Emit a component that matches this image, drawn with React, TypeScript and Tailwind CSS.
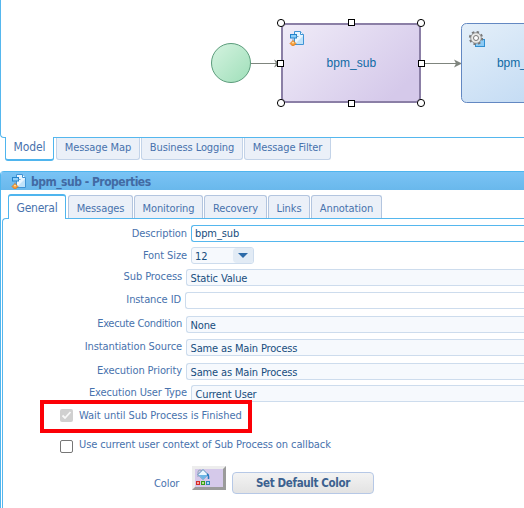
import React from 'react';

const UI = "font-['DejaVu_Sans_Condensed','DejaVu_Sans',sans-serif] [font-stretch:condensed]";

function SubProcessIcon({ className }: { className: string }) {
  return (
    <svg className={className} width="16" height="16" viewBox="0 0 16 16">
      <path d="M5.500 1.500h6l3 3v10h-9z" fill="#e8f5ff" stroke="#3f94d6" />
      <path d="M6 14L14 6v8z" fill="#bfe2fa" />
      <path d="M11.500 1.500v3h3" fill="#fff" stroke="#3f94d6" />
      <rect x="1.500" y="4.500" width="6" height="3.500" fill="#8fd0fa" stroke="#2583cb" />
      <path d="M4 8.500v3M7.500 6.500h2" stroke="#7aa2c4" />
      <path d="M4 10.500l3 3-2.500 2.500h-1l-2.500-2.500z" fill="#f79a35" stroke="#d87516" strokeWidth=".7" />
      <path d="M4 11.500l1.500 1.500L4 13.500 2.500 13z" fill="#ffe2a4" />
    </svg>
  );
}

function Diagram() {
  return (
    <svg className="block" width="523" height="137" viewBox="1 0 523 137">
      <defs>
        <linearGradient id="start" x1="0" y1="0" x2="1" y2="1">
          <stop offset="0" stopColor="#d5f3e0" />
          <stop offset="1" stopColor="#9fdfb9" />
        </linearGradient>
        <linearGradient id="sub" x1="0" y1="0" x2="1" y2=".6">
          <stop offset="0" stopColor="#f0ecf8" />
          <stop offset="1" stopColor="#d5c9ea" />
        </linearGradient>
        <linearGradient id="task" x1="0" y1="0" x2="1" y2="1">
          <stop offset="0" stopColor="#e4eff9" />
          <stop offset="1" stopColor="#b9d5f2" />
        </linearGradient>
      </defs>
      <circle cx="231" cy="63" r="19.500" fill="url(#start)" stroke="#5b9c7b" />
      <path d="M251 63.500h27M421 63.500h36" stroke="#7f857e" />
      <path d="M274 59.500l7 4-7 4 2-4zM454 59.500l8 4-8 4 2-4z" fill="#7f857e" />
      <rect x="282" y="24" width="138" height="78" rx="4" fill="url(#sub)" stroke="#8b7fa6" strokeWidth="2" />
      <rect x="461.500" y="23.500" width="140" height="79" rx="5" fill="url(#task)" stroke="#6388c2" />
      <g fontFamily="Liberation Sans, Arial, sans-serif" fontSize="12" fill="#0f6aa5">
        <text x="326.500" y="66.500" textLength="49.500">bpm_sub</text>
        <text x="497" y="66.500">bpm_</text>
      </g>
      <g transform="translate(289 30)">
        <SubProcessIcon className="" />
      </g>
      <rect x="475.500" y="39.500" width="9" height="7" fill="#8ccaf4" stroke="#2f8fd1" />
      <circle cx="476" cy="38" r="6" fill="none" stroke="#777" strokeWidth="2.200" strokeDasharray="2.350 2.350" />
      <circle cx="476" cy="38" r="5.300" fill="#e9e9e7" stroke="#858585" strokeWidth=".8" />
      <circle cx="476" cy="38" r="2.500" fill="#fff" stroke="#777" />
      <g fill="#fff" stroke="#000">
        <circle cx="281" cy="23" r="3.600" />
        <circle cx="421" cy="23" r="3.600" />
        <circle cx="281" cy="103" r="3.600" />
        <circle cx="421" cy="103" r="3.600" />
        <rect x="348.500" y="19.500" width="6" height="6" />
        <rect x="348.500" y="100.500" width="6" height="6" />
        <rect x="277.500" y="60.500" width="6" height="6" />
        <rect x="418.500" y="60.500" width="6" height="6" />
      </g>
    </svg>
  );
}

const modelTabs = [
  { label: 'Message Map', size: 'w-[84px]' },
  { label: 'Business Logging', size: 'w-[102px]' },
  { label: 'Message Filter', size: 'w-[87px]' },
];

const propertyTabs = [
  { label: 'Messages', size: 'w-[65px]' },
  { label: 'Monitoring', size: 'w-[69px]' },
  { label: 'Recovery', size: 'w-[63px]' },
  { label: 'Links', size: 'w-[42px]' },
  { label: 'Annotation', size: 'w-[71px]' },
];

const rows = [
  { label: 'Sub Process', value: 'Static Value', size: 'w-[183px] pt-px', gap: 'mb-[6px]', fill: 'bg-[#f6f9fd]' },
  { label: 'Instance ID', value: '', size: 'w-[182px] pt-px', gap: 'mb-[7px]', fill: 'bg-white' },
  { label: 'Execute Condition', value: 'None', size: 'w-[183px] pt-px tracking-[-0.3px]', gap: 'mb-[6px]', fill: 'bg-[#f6f9fd]' },
  { label: 'Instantiation Source', value: 'Same as Main Process', size: 'w-[183px] pt-px', gap: 'mb-[7px]', fill: 'bg-[#f6f9fd]' },
  { label: 'Execution Priority', value: 'Same as Main Process', size: 'w-[183px] pt-px', gap: 'mb-[5px]', fill: 'bg-[#f6f9fd]' },
  { label: 'Execution User Type', value: 'Current User', size: 'w-[188px] pt-px', gap: '', fill: 'bg-[#f6f9fd]' },
];

export default function App() {
  return (
    <div className={`h-[508px] w-[524px] overflow-hidden whitespace-nowrap bg-white text-[11px] leading-[14px] tracking-[-0.1px] text-[#4872ad] ${UI}`}>
      <div className="h-[138px] overflow-hidden rounded-bl-[4px] border-b border-l border-[#55b7ee]">
        <Diagram />
      </div>
      <div className="flex h-[33px] gap-[2px] pl-[5px]">
        <div className="relative -mt-px h-[24px] w-[49px] rounded-b-[3px] border-x border-b-2 border-[#4fb5ee] bg-white pt-[3px] text-center text-[12px]">Model</div>
        {modelTabs.map((t) => (
          <div key={t.label} className={`-mr-px h-[22px] rounded-b-[3px] border border-t-0 border-[#c3d3e8] bg-[#ebf0f8] pt-[3px] text-center ${t.size}`}>{t.label}</div>
        ))}
      </div>

      <div className="h-[337px] overflow-hidden rounded-tl-[4px] border-l border-[#4fb5ee]">
        <div className="flex h-[19px] items-center border-t border-[#4fb5ee] bg-linear-to-b from-[#7ac3f5] to-[#69b8ec] pl-[10px]">
          <SubProcessIcon className="" />
          <span className="ml-[4px] pt-[2px] text-[12px] font-bold tracking-[-0.5px] text-[#426aa3]">bpm_sub - Properties</span>
        </div>
        <div className="flex h-[28px] items-end gap-[1px] pl-[7px]">
          <div className="relative mr-px h-[25px] w-[58px] translate-y-px rounded-t-[3px] border border-t-2 border-b-0 border-[#4fb5ee] bg-white pt-[5px] text-center text-[12px] tracking-[-0.25px]">General</div>
          {propertyTabs.map((t) => (
            <div key={t.label} className={`h-[23px] rounded-t-[3px] border border-b-0 border-[#b3c5df] bg-[#ebf0f8] pt-[6px] text-center ${t.size}`}>{t.label}</div>
          ))}
        </div>
        <div className="ml-px h-[300px] rounded-tl-[4px] border-l border-t border-[#55b7ee] pt-[6px]">
          <div className="mb-[5px] flex h-[17px]">
            <span className="mr-[4px] w-[184px] pt-[2px] text-right">Description</span>
            <div className="flex-1 rounded-l-[3px] border border-r-0 border-[#55b7ee] pt-px pl-[3px] text-[#164d7d]">bpm_sub</div>
          </div>
          <div className="mb-[5px] flex h-[17px]">
            <span className="mr-[4px] w-[184px] pt-[2px] text-right">Font Size</span>
            <div className="flex w-[63px] justify-between overflow-hidden rounded-[3px] border border-[#cddced] bg-[#f6f9fd] pl-[3px] text-[#164d7d]">
              <span className="pt-[2px]">12</span>
              <div className="flex w-[20px] items-center justify-center rounded-l-[4px] bg-[#e2ebf5]">
                <svg width="10" height="5" viewBox="0 0 10 5"><path d="M0 0h10L5 5z" fill="#2c6aa8" /></svg>
              </div>
            </div>
          </div>
          {rows.map((r) => (
            <div key={r.label} className={`flex h-[17px] ${r.gap}`}>
              <span className={`pr-[4px] text-right ${r.size}`}>{r.label}</span>
              <div className={`flex-1 rounded-l-[3px] border border-r-0 border-[#cddced] pt-[2px] pl-[3.500px] tracking-[-0.15px] text-[#164d7d] ${r.fill}`}>{r.value}</div>
            </div>
          ))}
          <div className="relative -mt-[2px] ml-[37px] flex h-[33px] w-[212px] items-center border-[4px] border-[#fc0006] pb-[2px] pl-[16px]">
            <svg width="13" height="13" viewBox="0 0 13 13"><rect width="13" height="13" rx="2" fill="#d0d0d0" /><path d="M2.500 6.500l2.500 2.500 5.500-6" fill="none" stroke="#f8f8f8" strokeWidth="1.800" /></svg>
            <span className="ml-[6px] tracking-[-0.04px]">Wait until Sub Process is Finished</span>
          </div>
          <div className="mt-[4px] ml-[57px] flex h-[16px] items-center">
            <div className="mt-[2px] size-[13px] rounded-[2px] border border-[#767676] bg-white" />
            <span className="ml-[6px] pb-px">Use current user context of Sub Process on callback</span>
          </div>
          <div className="mt-[13px] ml-[151px] flex">
            <span className="mt-[11px] w-[38px]">Color</span>
            <div className="h-[24px] w-[34px] border-[3px] border-t-[#ededed] border-r-[#9b9b9b] border-b-[#9b9b9b] border-l-[#ededed] bg-[#d5c9ea]">
              <svg width="16" height="18" viewBox="0 0 16 18">
                <path d="M3 8V3q0-2 2-2t2 2" fill="none" stroke="#91a5b8" />
                <path d="M8 .500l5 5-5 5-5-5z" fill="#eaf7ff" stroke="#568fba" />
                <path d="M4 6h9l-5 4.500z" fill="#6cb6e6" />
                <path d="M12 5q2 1 1.500 5" fill="none" stroke="#267bc0" strokeWidth="1.500" />
                <rect x="1.500" y="12.500" width="3" height="3" fill="#f6a3a0" stroke="#d52a26" />
                <rect x="6.500" y="12.500" width="3" height="3" fill="#b7e48f" stroke="#379c17" />
                <rect x="11.500" y="12.500" width="3" height="3" fill="#a4dcf2" stroke="#2c84b5" />
              </svg>
            </div>
            <div className="mt-[6px] ml-[6px] h-[22px] w-[142px] rounded-[4px] border-[1.500px] border-[#b6c8e6] bg-linear-to-b from-[#f3f3f3] to-[#e3e3e3] pt-[3px] text-center text-[11.500px] font-bold tracking-[-0.35px] text-[#3c618f]">Set Default Color</div>
          </div>
        </div>
      </div>
    </div>
  );
}
